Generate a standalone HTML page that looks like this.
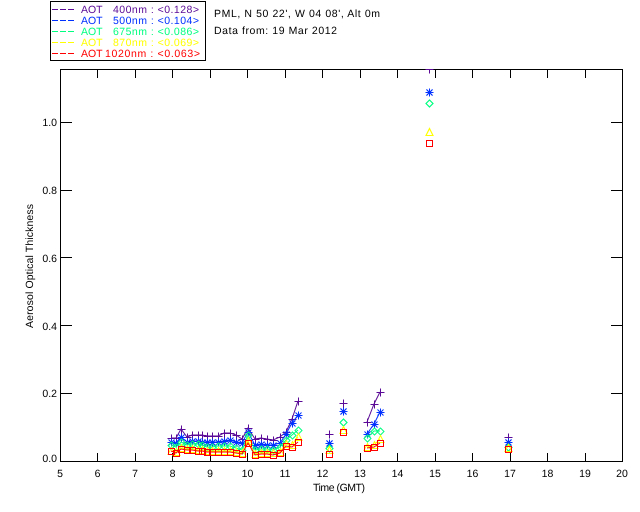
<!DOCTYPE html>
<html><head><meta charset="utf-8"><title>Aerosol Optical Thickness</title>
<style>
html,body{margin:0;padding:0;background:#fff;width:640px;height:512px;overflow:hidden}
svg{display:block}
text{font-family:"Liberation Sans",sans-serif;font-size:10.5px;fill:#000;text-rendering:geometricPrecision}
.a{shape-rendering:crispEdges;stroke:#000;stroke-width:1;fill:none}
.c{text-anchor:middle}
.l{text-anchor:end}
.s{fill:none;stroke-width:1}
</style></head><body>
<svg width="640" height="512" viewBox="0 0 640 512" xmlns="http://www.w3.org/2000/svg">
<defs>
<marker id="mp" markerUnits="userSpaceOnUse" markerWidth="12" markerHeight="12" refX="6" refY="6" overflow="visible"><path d="M2.5 6.5H10.5M6.5 2.5V10.5" fill="none" stroke="#5a0a96" shape-rendering="crispEdges"/></marker>
<marker id="mb" markerUnits="userSpaceOnUse" markerWidth="12" markerHeight="12" refX="6" refY="6" overflow="visible"><path d="M2.5 6.5H10.5M6.5 2.5V10.5M3.5 3.5L9.5 9.5M9.5 3.5L3.5 9.5" fill="none" stroke="#0030ff"/></marker>
<marker id="mg" markerUnits="userSpaceOnUse" markerWidth="12" markerHeight="12" refX="6" refY="6" overflow="visible"><path d="M6.5 3L10 6.5L6.5 10L3 6.5Z" fill="none" stroke="#00ff80"/></marker>
<marker id="my" markerUnits="userSpaceOnUse" markerWidth="12" markerHeight="12" refX="6" refY="6" overflow="visible"><path d="M6.5 2.5L10 9.5H3Z" fill="none" stroke="#ffff00"/></marker>
<marker id="mr" markerUnits="userSpaceOnUse" markerWidth="12" markerHeight="12" refX="6" refY="6" overflow="visible"><path d="M3.5 3.5H9.5V9.5H3.5Z" fill="none" stroke="#ff0000" shape-rendering="crispEdges"/></marker>
<clipPath id="pc"><rect x="60" y="69" width="563" height="392"/></clipPath>
</defs>

<!-- legend -->
<rect class="a" x="50.5" y="1.5" width="155" height="59"/>
<path d="M52 9.5h6M60 9.5h6M68 9.5h6" stroke="#5a0a96" shape-rendering="crispEdges"/>
<path d="M52 20.5h6M60 20.5h6M68 20.5h6" stroke="#0030ff" shape-rendering="crispEdges"/>
<path d="M52 31.5h6M60 31.5h6M68 31.5h6" stroke="#00ff80" shape-rendering="crispEdges"/>
<path d="M52 42.5h6M60 42.5h6M68 42.5h6" stroke="#ffff00" shape-rendering="crispEdges"/>
<path d="M52 53.5h6M60 53.5h6M68 53.5h6" stroke="#ff0000" shape-rendering="crispEdges"/>
<text x="81" y="13" style="fill:#5a0a96">AOT</text><text x="113" y="13" style="fill:#5a0a96" textLength="86">400nm : &lt;0.128&gt;</text>
<text x="81" y="24" style="fill:#0030ff">AOT</text><text x="113" y="24" style="fill:#0030ff" textLength="86">500nm : &lt;0.104&gt;</text>
<text x="81" y="35" style="fill:#00ff80">AOT</text><text x="113" y="35" style="fill:#00ff80" textLength="86">675nm : &lt;0.086&gt;</text>
<text x="81" y="46" style="fill:#ffff00">AOT</text><text x="113" y="46" style="fill:#ffff00" textLength="86">870nm : &lt;0.069&gt;</text>
<text x="81" y="57" style="fill:#ff0000">AOT</text><text x="105" y="57" style="fill:#ff0000" textLength="95">1020nm : &lt;0.063&gt;</text>

<text x="214" y="17" textLength="166">PML, N 50 22', W 04 08', Alt 0m</text>
<text x="214" y="34" textLength="123">Data from: 19 Mar 2012</text>

<!-- frame and ticks -->
<rect class="a" x="60.5" y="69.5" width="562" height="392"/>
<path class="a" d="M97.5 461V453M135.5 461V453M172.5 461V453M210.5 461V453M247.5 461V453M285.5 461V453M322.5 461V453M360.5 461V453M397.5 461V453M435.5 461V453M472.5 461V453M510.5 461V453M547.5 461V453M585.5 461V453
M97.5 70V78M135.5 70V78M172.5 70V78M210.5 70V78M247.5 70V78M285.5 70V78M322.5 70V78M360.5 70V78M397.5 70V78M435.5 70V78M472.5 70V78M510.5 70V78M547.5 70V78M585.5 70V78
M61 122.5H72M61 190.5H72M61 257.5H72M61 325.5H72M61 393.5H72
M622 122.5H611M622 190.5H611M622 257.5H611M622 325.5H611M622 393.5H611"/>

<!-- axis labels -->
<g class="c">
<text x="60" y="477" class="c">5</text><text x="97.5" y="477" class="c">6</text><text x="135" y="477" class="c">7</text><text x="172.5" y="477" class="c">8</text><text x="210" y="477" class="c">9</text><text x="247.5" y="477" class="c">10</text><text x="285" y="477" class="c">11</text><text x="322.5" y="477" class="c">12</text><text x="360" y="477" class="c">13</text><text x="397.5" y="477" class="c">14</text><text x="435" y="477" class="c">15</text><text x="472.5" y="477" class="c">16</text><text x="510" y="477" class="c">17</text><text x="547.5" y="477" class="c">18</text><text x="585" y="477" class="c">19</text><text x="622" y="477" class="c">20</text>
</g>
<text x="313" y="491" textLength="52">Time (GMT)</text>
<text x="57" y="462" class="l">0.0</text>
<text x="57" y="397" class="l">0.2</text>
<text x="57" y="330" class="l">0.4</text>
<text x="57" y="262" class="l">0.6</text>
<text x="57" y="194" class="l">0.8</text>
<text x="57" y="126" class="l">1.0</text>
<text transform="translate(33,328) rotate(-90)" textLength="124">Aerosol Optical Thickness</text>

<!-- data -->
<g clip-path="url(#pc)">
<g class="s" stroke="#5a0a96" marker-start="url(#mp)" marker-mid="url(#mp)" marker-end="url(#mp)">
<polyline points="171,438 176,438 181,429 187,437 192,435 198,435 202,435 207,436 212,436 218,436 224,433 230,433 236,435 242,439 248,428 255,439 261,438 267,439 273,440 280,437 286,432 292,419 298,401"/>
<polyline points="329,434 329,434"/>
<polyline points="343,403 343,403"/>
<polyline points="367,422 374,404 380,392"/>
<polyline points="429,69 429,69"/>
<polyline points="508,437 508,437"/>
</g>
<g class="s" stroke="#0030ff" marker-start="url(#mb)" marker-mid="url(#mb)" marker-end="url(#mb)">
<polyline points="171,442 176,443 181,437 187,442 192,441 198,441 202,442 207,442 212,442 218,442 224,441 230,440 236,442 242,443 248,432 255,445 261,444 267,445 273,445 280,443 286,434 292,423 298,415"/>
<polyline points="329,443 329,443"/>
<polyline points="343,411 343,411"/>
<polyline points="367,434 374,424 380,412"/>
<polyline points="429,92 429,92"/>
<polyline points="508,442 508,442"/>
</g>
<g class="s" stroke="#00ff80" marker-start="url(#mg)" marker-mid="url(#mg)" marker-end="url(#mg)">
<polyline points="171,445 176,447 181,442 187,445 192,444 198,444 202,445 207,447 212,447 218,446 224,446 230,446 236,448 242,450 248,435 255,450 261,449 267,449 273,450 280,447 286,440 292,435 298,430"/>
<polyline points="329,448 329,448"/>
<polyline points="343,422 343,422"/>
<polyline points="367,438 374,431 380,431"/>
<polyline points="429,103 429,103"/>
<polyline points="508,447 508,447"/>
</g>
<g class="s" stroke="#ffff00" marker-start="url(#my)" marker-mid="url(#my)" marker-end="url(#my)">
<polyline points="171,451 176,452 181,448 187,449 192,449 198,450 202,450 207,451 212,451 218,451 224,451 230,451 236,452 242,453 248,441 255,454 261,453 267,453 273,453 280,452 286,444 292,445 298,437"/>
<polyline points="329,450 329,450"/>
<polyline points="343,430 343,430"/>
<polyline points="367,447 374,445 380,439"/>
<polyline points="429,132 429,132"/>
<polyline points="508,448 508,448"/>
</g>
<g class="s" stroke="#ff0000" marker-start="url(#mr)" marker-mid="url(#mr)" marker-end="url(#mr)">
<polyline points="171,451 176,453 181,449 187,450 192,450 198,451 202,451 207,452 212,452 218,452 224,452 230,452 236,453 242,454 248,443 255,455 261,454 267,454 273,455 280,453 286,446 292,447 298,442"/>
<polyline points="329,454 329,454"/>
<polyline points="343,432 343,432"/>
<polyline points="367,448 374,447 380,443"/>
<polyline points="429,143 429,143"/>
<polyline points="508,449 508,449"/>
</g>
</g>
</svg>
</body></html>
